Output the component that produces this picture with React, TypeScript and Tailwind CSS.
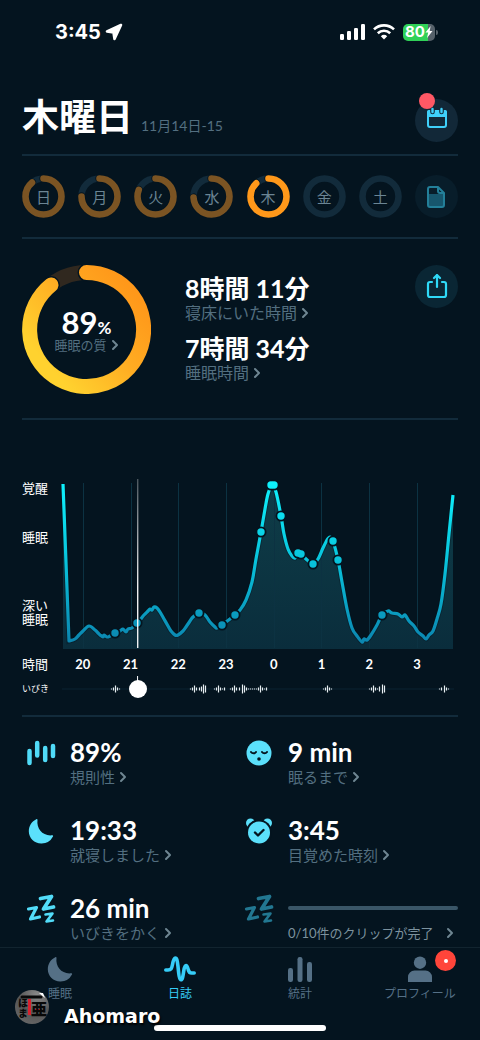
import { useState } from "react";

type Point = [number, number];

type Day = {
  label: string;
  score?: number;
  current?: boolean;
};

const DAYS: Day[] = [
  { label: "日", score: 89 },
  { label: "月", score: 75 },
  { label: "火", score: 81 },
  { label: "水", score: 74 },
  { label: "木", score: 88, current: true },
  { label: "金" },
  { label: "土" },
];

const HOURS = ["20", "21", "22", "23", "0", "1", "2", "3"];
const HOUR_X = [21, 69, 116, 164, 212, 259, 307, 355];

// Sleep depth over the night; a lower y is closer to being awake.
const DEPTH: Point[] = [
  [1, 7], [7, 164], [13, 162], [17, 158], [21, 154], [27, 149], [33, 153],
  [36, 156], [38, 158], [41, 160], [42, 158], [45, 160], [48, 159], [53, 156],
  [58, 154], [61, 152], [64, 155], [66, 152], [70, 151], [75, 146], [78, 143],
  [82, 138], [86, 134], [88, 132], [90, 133], [92, 130], [95, 131], [98, 135],
  [102, 142], [106, 149], [109, 154], [113, 158], [116, 158], [121, 154],
  [124, 150], [128, 144], [131, 140], [137, 136], [143, 138], [148, 145],
  [153, 150], [155, 151], [160, 148], [168, 142], [173, 138], [178, 133],
  [184, 123], [190, 105], [194, 82], [199, 55], [203, 32], [206, 17],
  [210, 8], [214, 15], [219, 39], [222, 57], [226, 72], [230, 79], [233, 81],
  [236, 76], [239, 77], [244, 82], [251, 87], [256, 82], [261, 71], [265, 63],
  [268, 60], [271, 64], [276, 83], [280, 105], [285, 132], [290, 151],
  [295, 159], [300, 165], [302, 162], [305, 163], [309, 158], [315, 148],
  [320, 138], [326, 134], [330, 136], [336, 137], [340, 140], [343, 138],
  [347, 144], [352, 149], [356, 155], [361, 159], [364, 162], [367, 158],
  [371, 154], [375, 142], [379, 127], [383, 97], [387, 57], [391, 18],
];

const EVENTS: Point[] = [
  [53, 156], [75, 146], [137, 136], [160, 148], [173, 138], [199, 55],
  [209, 8], [212, 8], [219, 39], [236, 76], [239, 77], [251, 87], [271, 64],
  [276, 83], [320, 138],
];

// [x, height] of every bar in the snoring track
const SNORES: Point[] = [
  [49, 1], [51, 3], [53, 7], [55, 3], [57, 1],
  [128, 1], [130, 3], [132, 7], [134, 3], [137, 3], [139, 5], [141, 9], [143, 7],
  [152, 1], [154, 3], [156, 7], [158, 3], [160, 1], [162, 3],
  [168, 1], [170, 3], [172, 7], [174, 3], [177, 3], [180, 9], [182, 7], [184, 3],
  [186, 1], [188, 1], [190, 1], [192, 1], [194, 1], [196, 3], [198, 7], [200, 3],
  [202, 1], [204, 3],
  [261, 1], [263, 3], [265, 7], [267, 3], [269, 1],
  [307, 1], [309, 3], [311, 7], [313, 3], [315, 1], [317, 5], [320, 9], [322, 7],
  [377, 1], [379, 3], [382, 7], [384, 3], [386, 1],
];

function smoothPath(points: Point[]) {
  const [start, ...rest] = points;
  let d = `M${start[0]} ${start[1]} L${rest[0][0]} ${rest[0][1]}`;
  for (let i = 0; i < rest.length - 1; i++) {
    const a = rest[Math.max(i - 1, 0)];
    const b = rest[i];
    const c = rest[i + 1];
    const e = rest[Math.min(i + 2, rest.length - 1)];
    d += ` C${b[0] + (c[0] - a[0]) / 6} ${b[1] + (c[1] - a[1]) / 6}`;
    d += ` ${c[0] - (e[0] - b[0]) / 6} ${c[1] - (e[1] - b[1]) / 6} ${c[0]} ${c[1]}`;
  }
  return d;
}

const LINE = smoothPath(DEPTH);

export default function App() {
  return (
    <div className="flex min-h-screen flex-col bg-[#04141f] font-['Lato','Noto_Sans_CJK_JP',sans-serif] text-white">
      <StatusBar />
      <main className="flex-1 px-[22px]">
        <header className="mt-[22px] flex h-[70px] items-center justify-between border-b-2 border-[#122b3b]">
          <div className="mb-[6px] flex items-baseline gap-2">
            <h1 className="text-[37px] leading-[56px] font-bold">木曜日</h1>
            <p className="text-sm text-[#536f80]">11月14日-15</p>
          </div>
          <button
            aria-label="カレンダー"
            className="relative grid size-[43px] place-items-center rounded-full bg-[#122838]"
          >
            <CalendarIcon />
            <span className="absolute top-[-6px] left-1 size-4 rounded-full bg-[#ff5865]" />
          </button>
        </header>

        <nav
          aria-label="曜日"
          className="flex h-[83px] items-center justify-between border-b-2 border-[#122b3b]"
        >
          {DAYS.map((day) => (
            <DayRing key={day.label} day={day} />
          ))}
          <button
            aria-label="メモ"
            className="grid size-[43px] place-items-center rounded-full bg-[#081d2a]"
          >
            <NoteIcon />
          </button>
        </nav>

        <Summary />
        <SleepChart />
        <Stats />
      </main>
      <TabBar />
    </div>
  );
}

function StatusBar() {
  return (
    <div className="flex h-16 items-center justify-between pr-[42px] pl-[55px] font-['Inter',sans-serif]">
      <div className="flex items-center gap-1">
        <span className="text-xl font-bold">3:45</span>
        <svg
          viewBox="0 0 18 18"
          className="size-[18px]"
          fill="#fff"
          stroke="#fff"
          strokeWidth="2.6"
          strokeLinejoin="round"
        >
          <path d="M16 2 2 8.5l6.5 1 1 6.5Z" />
        </svg>
      </div>
      <div className="flex items-center gap-2">
        <svg viewBox="0 0 26 16" className="h-4 w-[26px]" fill="#fff">
          <rect x="1" y="10" width="4" height="6" rx="1.2" />
          <rect x="8" y="7" width="4" height="9" rx="1.2" />
          <rect x="15" y="4" width="4" height="12" rx="1.2" />
          <rect x="22" y="0" width="4" height="16" rx="1.2" />
        </svg>
        <svg viewBox="0 0 22 16" className="h-4 w-[22px]" fill="none" stroke="#fff" strokeWidth="2.6">
          <path d="M1 5.4a14.4 14.4 0 0 1 20 0" />
          <path d="M4.8 9.3a9 9 0 0 1 12.4 0" />
          <path d="M7.8 12.3a4.8 4.8 0 0 1 6.4 0L11 15.6Z" fill="#fff" stroke="none" />
        </svg>
        <div className="flex items-center">
          <div className="flex h-[17px] w-8 items-center rounded-[5px] bg-linear-to-r from-[#30d158] from-78% to-[#56616a] to-78% pl-[2px]">
            <span className="text-[15px] leading-4 font-bold">80</span>
            <svg viewBox="0 0 8 12" className="h-3 w-2" fill="#fff">
              <path d="M5.6 0 .5 6.6h2.7L2 12l5.5-7H4.7Z" />
            </svg>
          </div>
          <span className="ml-[1px] h-[5px] w-[2px] rounded-r-full bg-[#56616a]" />
        </div>
      </div>
    </div>
  );
}

function DayRing({ day }: { day: Day }) {
  return (
    <button className="relative grid size-[43px] place-items-center">
      <svg viewBox="0 0 43 43" className="absolute inset-0 size-full -rotate-90" fill="none">
        <circle cx="21.5" cy="21.5" r="18" stroke="#122b3b" strokeWidth="6.6" />
        {day.score && (
          <>
            <circle
              cx="21.5"
              cy="21.5"
              r="18"
              pathLength="100"
              stroke="#04141f"
              strokeWidth="8.4"
              strokeLinecap="round"
              strokeDasharray={`${day.score} 100`}
            />
            <circle
              cx="21.5"
              cy="21.5"
              r="18"
              pathLength="100"
              stroke={day.current ? "#ff981a" : "#7b5423"}
              strokeWidth="6.6"
              strokeLinecap="round"
              strokeDasharray={`${day.score} 100`}
            />
          </>
        )}
      </svg>
      <span className="relative text-[15px] leading-5 text-[#6b8594]">{day.label}</span>
    </button>
  );
}

function Summary() {
  return (
    <section className="flex h-[181px] items-start border-b-2 border-[#122b3b] pt-[26px]">
      <button className="relative flex size-[129px] flex-col items-center justify-center pt-[6px]">
        <svg viewBox="0 0 129 129" className="absolute inset-0 size-full" fill="none">
          <defs>
            <linearGradient id="quality" x1="0.85" y1="0.1" x2="0.1" y2="0.75">
              <stop offset="0" stopColor="#ff981a" />
              <stop offset="0.45" stopColor="#ffac22" />
              <stop offset="1" stopColor="#ffd22f" />
            </linearGradient>
          </defs>
          <circle cx="64.5" cy="64.5" r="57" stroke="#30281f" strokeWidth="15" />
          <path d="M64.5 7.5A57 57 0 1 1 29 20" stroke="#04141f" strokeWidth="18" strokeLinecap="round" />
          <path d="M64.5 7.5A57 57 0 1 1 29 20" stroke="url(#quality)" strokeWidth="15" strokeLinecap="round" />
        </svg>
        <span className="relative flex h-6 items-baseline text-[31px] leading-6 font-bold">
          89<span className="text-[17px] leading-6">%</span>
        </span>
        <Caption className="relative text-[13px]">睡眠の質</Caption>
      </button>
      <div className="flex flex-1 flex-col gap-[10px] pt-[9px] pl-[34px]">
        <button className="flex flex-col items-start">
          <span className="text-[25px] leading-7 font-bold">8時間 11分</span>
          <Caption className="text-base">寝床にいた時間</Caption>
        </button>
        <button className="flex flex-col items-start">
          <span className="text-[25px] leading-7 font-bold">7時間 34分</span>
          <Caption className="text-base">睡眠時間</Caption>
        </button>
      </div>
      <button
        aria-label="共有"
        className="grid size-[43px] place-items-center rounded-full bg-[#0a2634]"
      >
        <svg
          viewBox="0 0 22 26"
          className="h-[26px] w-[22px]"
          fill="none"
          stroke="#2fd9f7"
          strokeWidth="2.2"
          strokeLinecap="round"
          strokeLinejoin="round"
        >
          <path d="M6 8H4a2 2 0 0 0-2 2v11a2 2 0 0 0 2 2h14a2 2 0 0 0 2-2V10a2 2 0 0 0-2-2h-2" />
          <path d="M11 13V1M8 4l3-3 3 3" />
        </svg>
      </button>
    </section>
  );
}

function SleepChart() {
  const [position, setPosition] = useState(178);
  const playhead = 9 + (position / 1000) * 374;

  return (
    <section className="grid grid-cols-[40px_1fr] border-b-2 border-[#122b3b] pt-[57px] pr-1 text-[13px]">
      <div className="flex flex-col leading-[14px]">
        <span className="mt-1">覚醒</span>
        <span className="mt-[35px]">睡眠</span>
        <span className="mt-[54px]">
          深い
          <br />
          睡眠
        </span>
      </div>
      <svg viewBox="0 0 392 172" className="w-full overflow-visible" fill="none">
        <defs>
          <linearGradient id="depth" gradientUnits="userSpaceOnUse" x1="0" y1="0" x2="0" y2="165">
            <stop offset="0" stopColor="#0ff5ff" />
            <stop offset="0.5" stopColor="#08c4dc" />
            <stop offset="1" stopColor="#0b86b0" />
          </linearGradient>
          <linearGradient id="area" gradientUnits="userSpaceOnUse" x1="0" y1="0" x2="0" y2="172">
            <stop offset="0" stopColor="#0f3e49" />
            <stop offset="1" stopColor="#0a2d3c" />
          </linearGradient>
          <linearGradient id="playhead" gradientUnits="userSpaceOnUse" x1="0" y1="2" x2="0" y2="110">
            <stop offset="0" stopColor="#fff" stopOpacity="0.3" />
            <stop offset="1" stopColor="#fff" />
          </linearGradient>
        </defs>
        <path d={`${LINE} V172 H1 Z`} fill="url(#area)" />
        {HOUR_X.map((x) => (
          <path key={x} d={`M${x}.5 6V171`} stroke="#0c3242" strokeWidth="1" />
        ))}
        <path d={LINE} stroke="#04141f" strokeWidth="5" strokeOpacity="0.4" />
        <path d={LINE} stroke="url(#depth)" strokeWidth="3.2" strokeLinejoin="round" />
        {EVENTS.map(([x, y]) => (
          <circle key={x} cx={x} cy={y} r="5.5" fill="#04141f" />
        ))}
        {EVENTS.map(([x, y]) => (
          <circle key={x} cx={x} cy={y} r="3.7" fill="url(#depth)" />
        ))}
        <rect x={playhead - 0.5} y="2" width="1.3" height="169" fill="url(#playhead)" />
      </svg>

      <span className="mt-[5px] leading-5">時間</span>
      <div className="mt-[5px] mr-[13px] -ml-[3px] grid grid-cols-8 text-center font-bold leading-5">
        {HOURS.map((hour) => (
          <span key={hour}>{hour}</span>
        ))}
      </div>

      <label htmlFor="snore" className="mt-[5px] mb-4 text-[9px] leading-5">
        いびき
      </label>
      <div className="relative mt-[5px] mb-4 h-5">
        <svg viewBox="0 0 392 20" className="size-full overflow-visible" fill="none">
          <path d="M0 10H392" stroke="#0b2232" />
          <path d={`M${playhead} -3V10`} stroke="#fff" />
          {SNORES.map(([x, h]) => (
            <path key={x} d={`M${x}.5 ${10 - h / 2}v${h}`} stroke="#e8eef2" strokeWidth="1.2" />
          ))}
        </svg>
        <input
          id="snore"
          type="range"
          min="0"
          max="1000"
          value={position}
          onChange={(e) => setPosition(Number(e.target.value))}
          className="absolute inset-0 w-full appearance-none bg-transparent [&::-webkit-slider-thumb]:size-[18px] [&::-webkit-slider-thumb]:appearance-none [&::-webkit-slider-thumb]:rounded-full [&::-webkit-slider-thumb]:bg-white"
        />
      </div>
    </section>
  );
}

function Stats() {
  return (
    <section className="grid grid-cols-2 gap-y-7 pt-[21px]">
      <Stat icon={<RegularityIcon />} value="89%" label="規則性" />
      <Stat icon={<FaceIcon />} value="9 min" label="眠るまで" />
      <Stat icon={<MoonIcon className="size-[26px] text-[#5be0fb]" />} value="19:33" label="就寝しました" />
      <Stat icon={<AlarmIcon />} value="3:45" label="目覚めた時刻" />
      <Stat icon={<SnoreIcon className="text-[#52dcf8]" />} value="26 min" label="いびきをかく" />
      <button className="flex items-start text-left">
        <span className="grid h-[30px] w-[48px] shrink-0 place-items-center pr-[10px]">
          <SnoreIcon className="text-[#227791]" />
        </span>
        <span className="flex-1">
          <span className="mt-3 mb-3 block h-1 rounded-full bg-[#3a5667]" />
          <Caption className="justify-between pr-1 text-[13px] whitespace-nowrap text-[#7c929e]">
            0/10件のクリップが完了
          </Caption>
        </span>
      </button>
    </section>
  );
}

function Stat({ icon, value, label }: { icon: React.ReactNode; value: string; label: string }) {
  return (
    <button className="flex items-start text-left">
      <span className="grid h-[30px] w-[48px] shrink-0 place-items-center pr-[10px]">{icon}</span>
      <span className="flex flex-col">
        <span className="text-[26px] leading-7 font-bold">{value}</span>
        <Caption className="text-[15px]">{label}</Caption>
      </span>
    </button>
  );
}

function Caption({
  children,
  className = "",
}: {
  children: React.ReactNode;
  className?: string;
}) {
  const color = className.includes("text-[#") ? "" : "text-[#536f80]";
  return (
    <span className={`flex items-center gap-1 leading-[22px] ${color} ${className}`}>
      {children}
      <svg
        viewBox="0 0 8 12"
        className="h-3 w-2"
        fill="none"
        stroke="#6f8692"
        strokeWidth="2"
        strokeLinecap="round"
        strokeLinejoin="round"
      >
        <path d="m2 2 4 4-4 4" />
      </svg>
    </span>
  );
}

function TabBar() {
  return (
    <footer className="relative h-[93px] border-t border-[#12242f] bg-[#04141f] text-[#557086]">
      <nav className="grid grid-cols-4 pt-2 text-xs leading-4">
        <a href="#sleep" className="flex flex-col items-center gap-1">
          <MoonIcon className="size-[26px]" />
          睡眠
        </a>
        <a href="#journal" className="flex flex-col items-center gap-1 text-[#36cdf8]">
          <svg
            viewBox="0 0 32 26"
            className="h-[26px] w-8"
            fill="none"
            stroke="currentColor"
            strokeWidth="3.6"
            strokeLinecap="round"
            strokeLinejoin="round"
          >
            <path d="M1.8 14H4c3 0 3.6-1 4.5-5.5C9.3 4 10 2 11.3 2c1.5 0 2 2.5 2.7 8.500.8 8 1.4 13.300 3 13.300s2-4 2.800-9c.5-3.500 1-5.300 2.200-5.300 1.300 0 1.600 1.700 2.200 4 .6 2.500 1.300 3.500 3.300 3.500h2.700" />
          </svg>
          日誌
        </a>
        <a href="#stats" className="flex flex-col items-center gap-1">
          <svg viewBox="0 0 26 26" className="size-[26px]" fill="currentColor">
            <rect x="1" y="12" width="5" height="14" rx="2.2" />
            <rect x="10.5" y="1" width="5" height="25" rx="2.2" />
            <rect x="20" y="6" width="5" height="20" rx="2.2" />
          </svg>
          統計
        </a>
        <a href="#profile" className="relative flex flex-col items-center gap-1">
          <svg viewBox="0 0 26 26" className="size-[26px]" fill="currentColor">
            <circle cx="13" cy="6.7" r="6.2" />
            <path d="M1 26v-5a6.5 6.5 0 0 1 6.5-6.5h11A6.5 6.5 0 0 1 25 21v5Z" />
          </svg>
          プロフィール
          <span className="absolute top-[-6px] left-1/2 ml-[15px] grid size-[21px] place-items-center rounded-full bg-[#ff453a]">
            <span className="size-1 rounded-full bg-white" />
          </span>
        </a>
      </nav>
      <div className="absolute bottom-[9px] left-1/2 h-[6px] w-[172px] -translate-x-1/2 rounded-full bg-white" />
      <div className="absolute bottom-3 left-[14px] flex items-center gap-[14px]">
        <Avatar />
        <span className="mt-[18px] font-['DejaVu_Sans',sans-serif] text-[19px] leading-6 font-bold text-white [text-shadow:1px_2px_2px_#000]">
          Ahomaro
        </span>
      </div>
    </footer>
  );
}

function Avatar() {
  return (
    <svg
      viewBox="0 0 36 36"
      className="size-9"
      fill="#080808"
      fontFamily="'Noto Sans CJK JP', sans-serif"
      fontWeight="900"
    >
      <defs>
        <radialGradient id="badge" cx="0.65" cy="0.15" r="0.9">
          <stop offset="0" stopColor="#8b8b8b" />
          <stop offset="0.6" stopColor="#555" />
          <stop offset="1" stopColor="#666" />
        </radialGradient>
      </defs>
      <circle cx="18" cy="18" r="17" fill="url(#badge)" />
      <path d="M14 10h3v16h-3zM21 20h7v3h-7z" fill="#d8202e" />
      <path d="M8 8h19" stroke="#080808" strokeWidth="3" strokeLinecap="round" />
      <text x="9" y="9" fontSize="10" className="[writing-mode:vertical-rl]">
        ほま
      </text>
      <text x="17" y="26" fontSize="16">
        亜
      </text>
      <path d="m25 4 6 5-2-5Z" fill="#fff" />
    </svg>
  );
}

function CalendarIcon() {
  return (
    <svg viewBox="0 0 22 22" className="mb-1 size-[22px]" fill="none">
      <rect x="2" y="4" width="18" height="16" rx="2" stroke="#3fd0fa" strokeWidth="2" />
      <path d="M1 5a2 2 0 0 1 2-2h16a2 2 0 0 1 2 2v5H1Z" fill="#3fd0fa" />
      <path d="M6.5 1V5M15.5 1V5" stroke="#122838" strokeWidth="4.6" strokeLinecap="round" />
      <path d="M6.5 2V5M15.5 2V5" stroke="#3fd0fa" strokeWidth="2.4" strokeLinecap="round" />
    </svg>
  );
}

function NoteIcon() {
  return (
    <svg viewBox="0 0 20 24" className="h-6 w-5" fill="none" stroke="#237f99" strokeWidth="2" strokeLinejoin="round">
      <path d="M2 9h16v11a2 2 0 0 1-2 2H4a2 2 0 0 1-2-2Z" fill="#17566d" stroke="none" />
      <path d="M12 2H4a2 2 0 0 0-2 2v16a2 2 0 0 0 2 2h12a2 2 0 0 0 2-2V8Z" />
      <path d="M12 2v4a2 2 0 0 0 2 2h4" />
    </svg>
  );
}

function RegularityIcon() {
  return (
    <svg viewBox="0 0 30 26" className="h-[26px] w-[30px]" stroke="#50dbf8" strokeWidth="4.5" strokeLinecap="round">
      <path d="M3.5 11v12M11.2 3v12.5M19.2 8v12M27 6v10" />
    </svg>
  );
}

function MoonIcon({ className = "" }: { className?: string }) {
  return (
    <svg viewBox="0 0 26 26" className={className} fill="currentColor">
      <path d="M8.3 1.2c.7-.4 1.3 0 1.2.8C8.3 10.5 14.8 18.3 24 17.3c.9-.1 1.4.5 1 1.3A13 13 0 0 1 13.2 25.5C6.5 25.5.8 20.3.8 13.3.8 8 3.8 3.3 8.3 1.2Z" />
    </svg>
  );
}

function FaceIcon() {
  return (
    <svg viewBox="0 0 26 26" className="size-[26px]" fill="none" stroke="#04141f" strokeWidth="2" strokeLinecap="round">
      <circle cx="13" cy="13" r="12.5" fill="#5be0fb" stroke="none" />
      <path d="M5 12c1.3 1.8 3.7 1.8 5 0M16 12c1.3 1.8 3.7 1.8 5 0" />
      <circle cx="13" cy="19" r="1.8" fill="#04141f" stroke="none" />
    </svg>
  );
}

function AlarmIcon() {
  return (
    <svg viewBox="0 0 26 26" className="size-[26px] overflow-visible" fill="none" strokeLinecap="round" strokeLinejoin="round">
      <circle cx="4.5" cy="5" r="4.5" fill="#5be0fb" />
      <circle cx="21.5" cy="5" r="4.5" fill="#5be0fb" />
      <circle cx="13" cy="14.5" r="13" fill="#04141f" />
      <circle cx="13" cy="14.5" r="11" fill="#5be0fb" />
      <path d="m9 14.5 3 3 5.5-5.5" stroke="#04141f" strokeWidth="2.4" />
    </svg>
  );
}

function SnoreIcon({ className = "" }: { className?: string }) {
  return (
    <svg
      viewBox="0 0 30 30"
      className={`size-[30px] ${className}`}
      fill="none"
      stroke="currentColor"
      strokeLinecap="round"
      strokeLinejoin="round"
    >
      <path d="M14.5 4.5 25.5 2.5 17.5 15 27.5 13" strokeWidth="3.8" />
      <path d="M2.5 15 10.5 13.5 4.5 25 13.5 23" strokeWidth="3.2" />
      <path d="M19.5 20.5 26.5 19.5 20.5 27.5 27 26.5" strokeWidth="2.6" />
    </svg>
  );
}
